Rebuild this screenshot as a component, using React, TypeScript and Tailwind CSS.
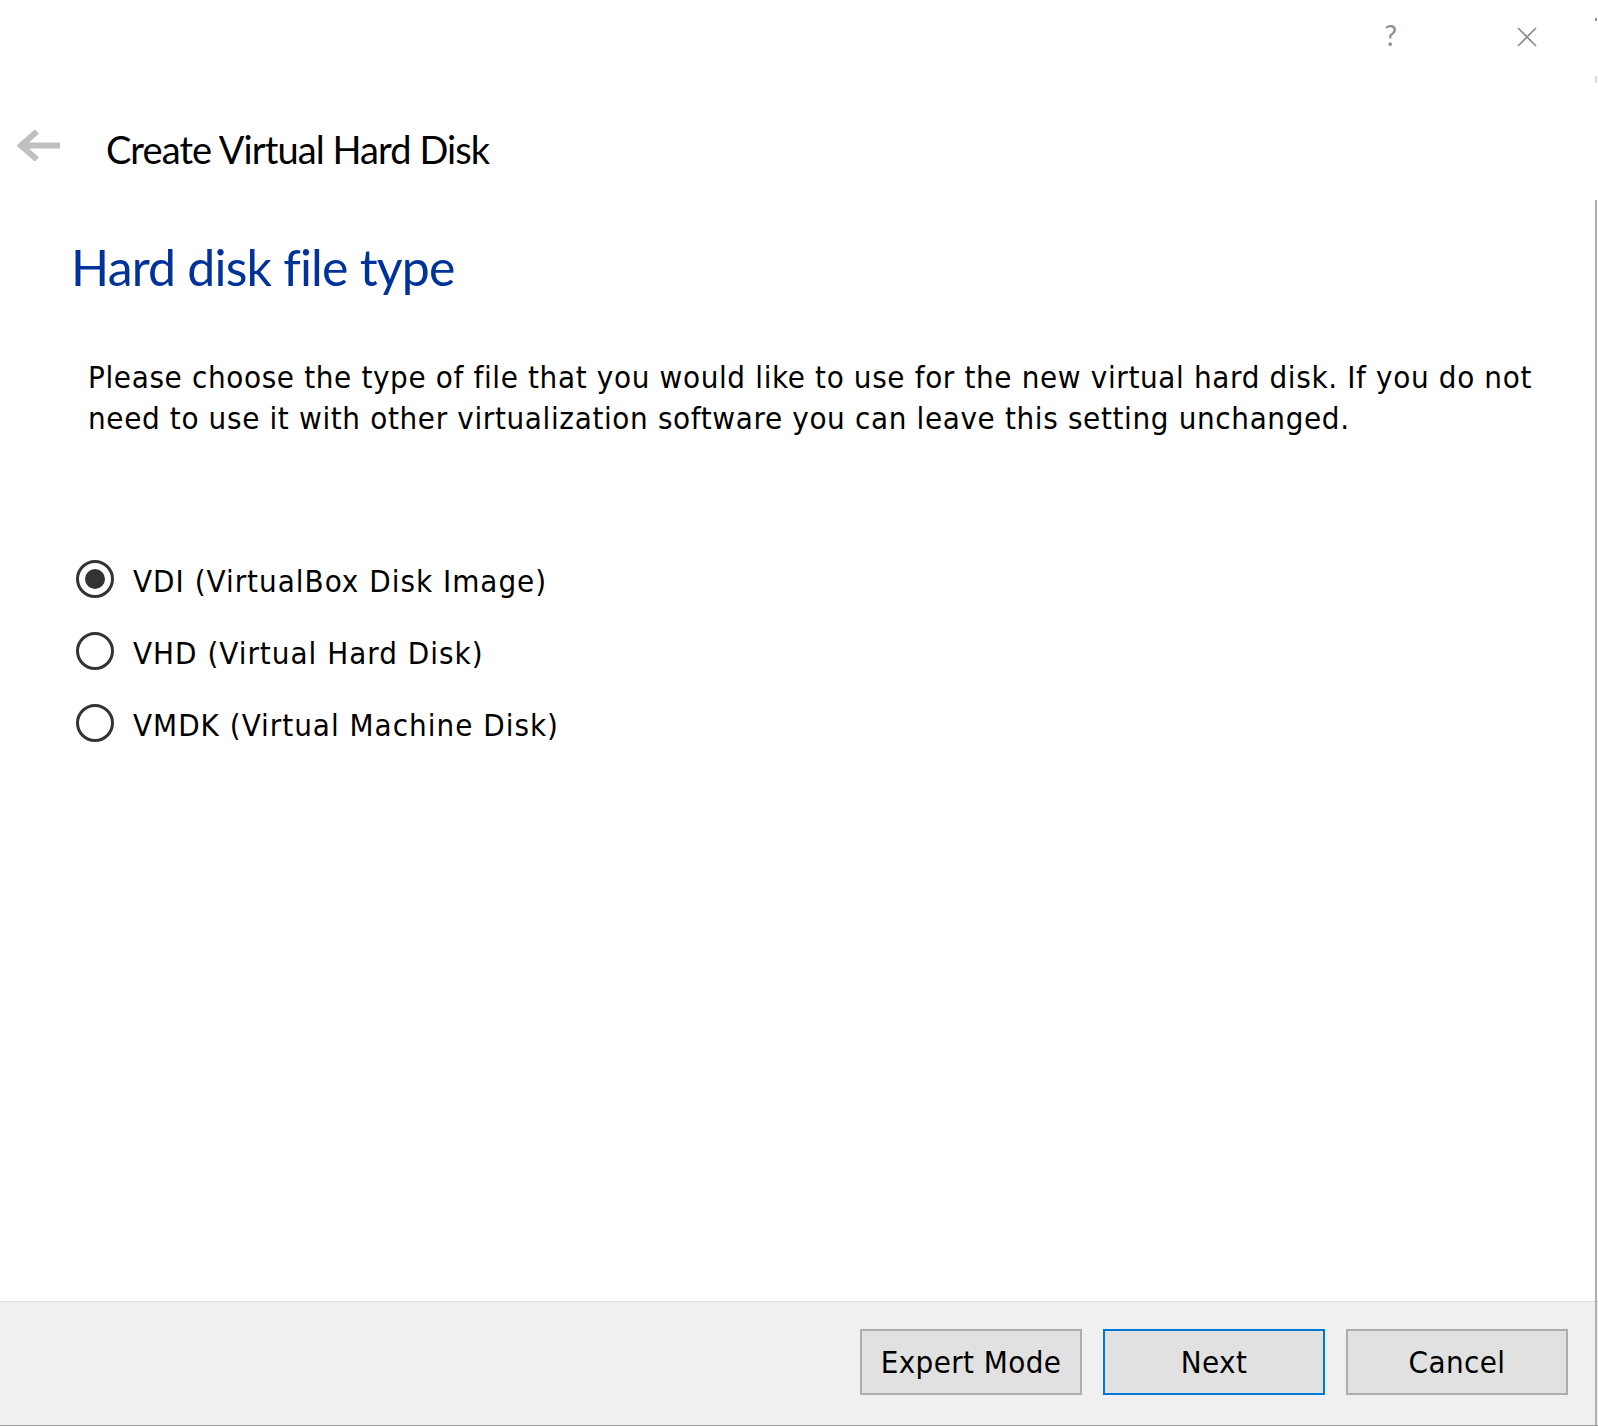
import React from 'react'

const body = "font-['DejaVu_Sans_Condensed','DejaVu_Sans',sans-serif]"
const ui = "font-['Lato','Open_Sans',sans-serif]"

function Radio({ label, checked }: { label: string; checked?: boolean }) {
  return (
    <div className="h-[72px] flex items-center">
      <div className="w-[38px] h-[38px] rounded-full border-[3px] border-[#333333] flex items-center justify-center">
        {checked && <div className="w-[20px] h-[20px] rounded-full bg-[#333333]" />}
      </div>
      <span className={`${body} ml-[19px] mt-[4px] text-[31px] leading-[41px] tracking-[1px] text-black`}>{label}</span>
    </div>
  )
}

function Button({ label, focused }: { label: string; focused?: boolean }) {
  return (
    <button
      className={`${body} w-[222px] h-[66px] bg-[#e1e1e1] text-[31px] tracking-[0.4px] text-black flex items-center justify-center border-2 ${
        focused ? 'border-[#0078d7]' : 'border-[#adadad]'
      }`}
    >
      {label}
    </button>
  )
}

export default function App() {
  return (
    <div className="w-[1598px] h-[1427px] bg-white flex flex-col relative overflow-hidden">
      {/* window edge on the right */}
      <div className="absolute right-[1px] top-[200px] bottom-[2px] w-[2px] bg-[#b0b0b0]" />
      <div className="absolute right-[1px] top-[18px] w-[2px] h-[3px] bg-[#909090]" />
      <div className="absolute right-[1px] top-[76px] w-[2px] h-[7px] bg-[#d8d8d8]" />

      {/* title bar */}
      <div className="h-[130px] flex justify-end items-start pt-[21px] pr-[61px]">
        <span className={`${ui} text-[28px] leading-[28px] text-[#8e8e8e]`}>?</span>
        <svg className="ml-[120px] mt-[6px]" width="20" height="20" viewBox="0 0 20 20">
          <path d="M1 1 L19 19 M19 1 L1 19" stroke="#8c8c8c" strokeWidth="1.6" fill="none" />
        </svg>
      </div>

      {/* header */}
      <div className="flex items-start pl-[17px] h-[40px]">
        <svg width="43" height="31" viewBox="0 0 43 31">
          <path d="M4 15.5 H43 M20 1.5 L4 15.5 L20 29.5" stroke="#c0c0c0" strokeWidth="6" fill="none" />
        </svg>
        <h1 className={`${ui} ml-[46px] -mt-[1px] text-[38px] leading-[40px] tracking-[-0.9px] text-black`}>
          Create Virtual Hard Disk
        </h1>
      </div>

      {/* page */}
      <h2 className={`${ui} mt-[72px] pl-[71px] text-[50px] leading-[50px] tracking-[-0.8px] text-[#003399]`}>
        Hard disk file type
      </h2>

      <p className={`${body} mt-[65px] pl-[88px] text-[31px] leading-[41px] tracking-[0.65px] text-black`}>
        Please choose the type of file that you would like to use for the new virtual hard disk. If you do not
        <br />
        need to use it with other virtualization software you can leave this setting unchanged.
      </p>

      <div className="mt-[104px] pl-[76px] flex flex-col">
        <Radio label="VDI (VirtualBox Disk Image)" checked />
        <Radio label="VHD (Virtual Hard Disk)" />
        <Radio label="VMDK (Virtual Machine Disk)" />
      </div>

      {/* footer */}
      <div className="mt-auto h-[124px] bg-[#f0f0f0] border-t border-[#dfdfdf] flex justify-end items-start pt-[27px] pr-[30px] gap-[21px]">
        <Button label="Expert Mode" />
        <Button label="Next" focused />
        <Button label="Cancel" />
      </div>
      <div className="h-[1px] bg-[#a0a0a0]" />
      <div className="h-[1px] bg-white" />
    </div>
  )
}
